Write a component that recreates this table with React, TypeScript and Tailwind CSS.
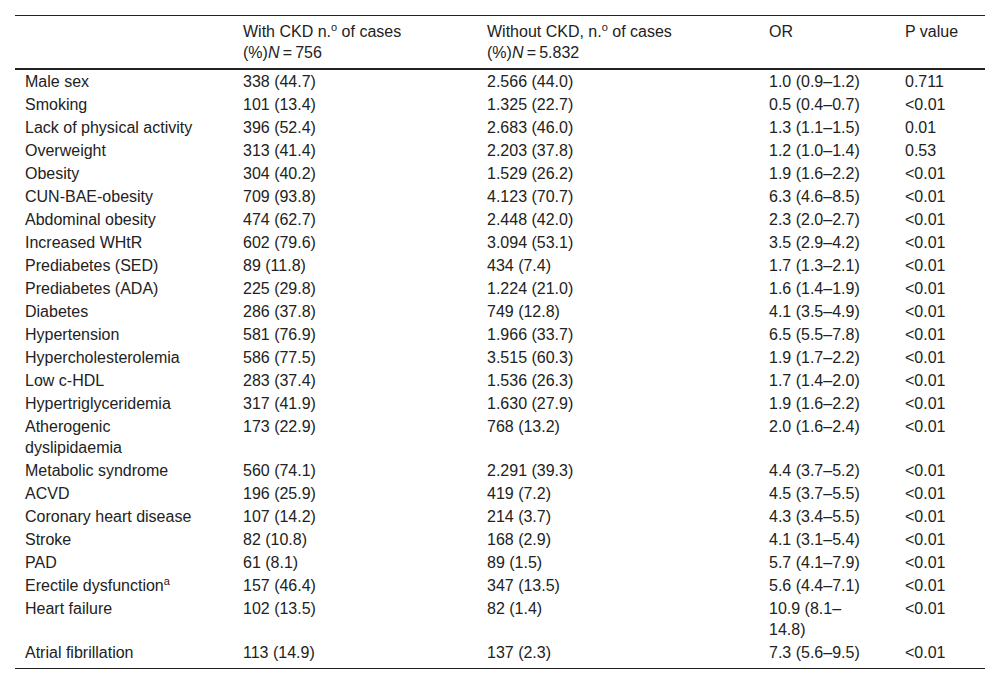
import React from "react";

type Row = { label: React.ReactNode; a: string; b: string; or: React.ReactNode; p: string };

const rows: Row[] = [
  { label: "Male sex", a: "338 (44.7)", b: "2.566 (44.0)", or: "1.0 (0.9–1.2)", p: "0.711" },
  { label: "Smoking", a: "101 (13.4)", b: "1.325 (22.7)", or: "0.5 (0.4–0.7)", p: "<0.01" },
  { label: "Lack of physical activity", a: "396 (52.4)", b: "2.683 (46.0)", or: "1.3 (1.1–1.5)", p: "0.01" },
  { label: "Overweight", a: "313 (41.4)", b: "2.203 (37.8)", or: "1.2 (1.0–1.4)", p: "0.53" },
  { label: "Obesity", a: "304 (40.2)", b: "1.529 (26.2)", or: "1.9 (1.6–2.2)", p: "<0.01" },
  { label: "CUN-BAE-obesity", a: "709 (93.8)", b: "4.123 (70.7)", or: "6.3 (4.6–8.5)", p: "<0.01" },
  { label: "Abdominal obesity", a: "474 (62.7)", b: "2.448 (42.0)", or: "2.3 (2.0–2.7)", p: "<0.01" },
  { label: "Increased WHtR", a: "602 (79.6)", b: "3.094 (53.1)", or: "3.5 (2.9–4.2)", p: "<0.01" },
  { label: "Prediabetes (SED)", a: "89 (11.8)", b: "434 (7.4)", or: "1.7 (1.3–2.1)", p: "<0.01" },
  { label: "Prediabetes (ADA)", a: "225 (29.8)", b: "1.224 (21.0)", or: "1.6 (1.4–1.9)", p: "<0.01" },
  { label: "Diabetes", a: "286 (37.8)", b: "749 (12.8)", or: "4.1 (3.5–4.9)", p: "<0.01" },
  { label: "Hypertension", a: "581 (76.9)", b: "1.966 (33.7)", or: "6.5 (5.5–7.8)", p: "<0.01" },
  { label: "Hypercholesterolemia", a: "586 (77.5)", b: "3.515 (60.3)", or: "1.9 (1.7–2.2)", p: "<0.01" },
  { label: "Low c-HDL", a: "283 (37.4)", b: "1.536 (26.3)", or: "1.7 (1.4–2.0)", p: "<0.01" },
  { label: "Hypertriglyceridemia", a: "317 (41.9)", b: "1.630 (27.9)", or: "1.9 (1.6–2.2)", p: "<0.01" },
  { label: "Atherogenic dyslipidaemia", a: "173 (22.9)", b: "768 (13.2)", or: "2.0 (1.6–2.4)", p: "<0.01" },
  { label: "Metabolic syndrome", a: "560 (74.1)", b: "2.291 (39.3)", or: "4.4 (3.7–5.2)", p: "<0.01" },
  { label: "ACVD", a: "196 (25.9)", b: "419 (7.2)", or: "4.5 (3.7–5.5)", p: "<0.01" },
  { label: "Coronary heart disease", a: "107 (14.2)", b: "214 (3.7)", or: "4.3 (3.4–5.5)", p: "<0.01" },
  { label: "Stroke", a: "82 (10.8)", b: "168 (2.9)", or: "4.1 (3.1–5.4)", p: "<0.01" },
  { label: "PAD", a: "61 (8.1)", b: "89 (1.5)", or: "5.7 (4.1–7.9)", p: "<0.01" },
  {
    label: (
      <>
        Erectile dysfunction
        <span className="relative -top-[6px] text-[11px] leading-none">a</span>
      </>
    ),
    a: "157 (46.4)",
    b: "347 (13.5)",
    or: "5.6 (4.4–7.1)",
    p: "<0.01",
  },
  {
    label: "Heart failure",
    a: "102 (13.5)",
    b: "82 (1.4)",
    or: (
      <>
        10.9 (8.1–<wbr />14.8)
      </>
    ),
    p: "<0.01",
  },
  { label: "Atrial fibrillation", a: "113 (14.9)", b: "137 (2.3)", or: "7.3 (5.6–9.5)", p: "<0.01" },
];

const grid = "grid grid-cols-[218px_244px_282px_136px_90px]";

const Sup = ({ children }: { children: React.ReactNode }) => (
  <span className="relative -top-[6px] text-[11px] leading-none">{children}</span>
);

export default function App() {
  return (
    <div
      className="w-[1000px] h-[685px] bg-white pt-[15px] pl-[15px] text-[16px] text-[#222222]"
      style={{ fontFamily: '"Liberation Sans", Arial, sans-serif' }}
    >
      <div className="w-[970px] border-t border-b border-[#222222]">
        <div className={`${grid} border-b-2 border-[#222222] leading-[21px]`}>
          <div className="pl-[10px] pt-[5px] pb-[5px]"></div>
          <div className="pl-[10px] pt-[5px] pb-[5px]">
            With CKD n.<Sup>o</Sup> of cases
            <br />
            (%)<i>N</i>{"\u2009=\u2009"}756
          </div>
          <div className="pl-[10px] pt-[5px] pb-[5px]">
            Without CKD, n.<Sup>o</Sup> of cases
            <br />
            (%)<i>N</i>{"\u2009=\u2009"}5.832
          </div>
          <div className="pl-[10px] pt-[5px] pb-[5px]">OR</div>
          <div className="pl-[10px] pt-[5px] pb-[5px]">P value</div>
        </div>
        <div className="pb-[4px]">
          {rows.map((r, i) => (
            <div key={i} className={`${grid} leading-[21px]`}>
              <div className="pl-[10px] pr-[32px] py-[1px]">{r.label}</div>
              <div className="pl-[10px] py-[1px]">{r.a}</div>
              <div className="pl-[10px] py-[1px]">{r.b}</div>
              <div className="pl-[10px] pr-[26px] py-[1px]">{r.or}</div>
              <div className="pl-[10px] py-[1px]">{r.p}</div>
            </div>
          ))}
        </div>
      </div>
    </div>
  );
}
